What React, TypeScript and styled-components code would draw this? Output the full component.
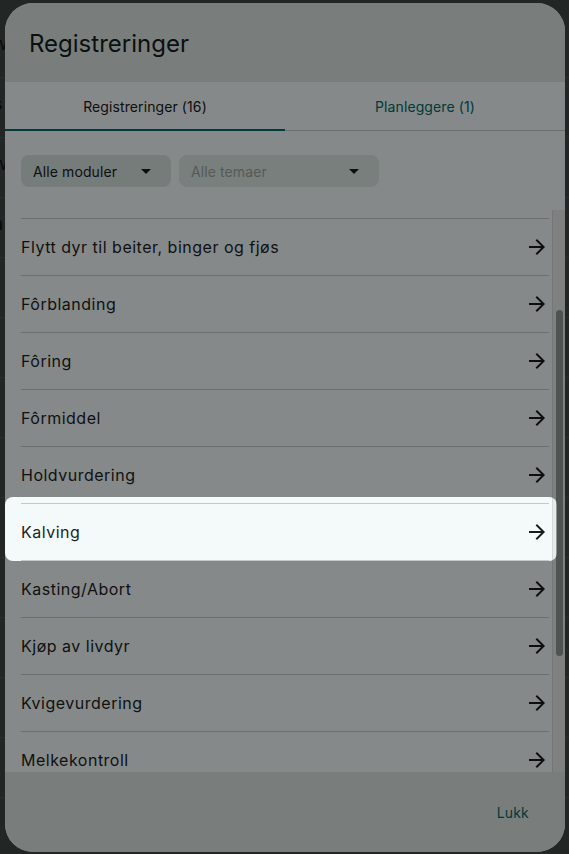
import React, { useLayoutEffect, useRef, useState } from "react";
import styled, { createGlobalStyle } from "styled-components";
import { MdArrowForward, MdArrowDropDown } from "react-icons/md";

const GlobalStyle = createGlobalStyle`
  html, body {
    margin: 0;
    padding: 0;
    width: 100%;
    height: 100%;
    overflow: hidden;
    background: #3f4544;
  }
  body {
    font-family: Inter, "Noto Sans", sans-serif;
  }
  *, *::before, *::after { box-sizing: border-box; }
`;

const Page = styled.div`
  position: relative;
  width: 569px;
  height: 854px;
  overflow: hidden;
  background: #3f4544;
`;

const BackPage = styled.div`
  display: flex;
  flex-direction: column;
  padding-top: 18px;
`;

const BackRow = styled.div`
  height: 60px;
  border-bottom: 1px solid #4c5351;
  display: flex;
  align-items: center;
  padding-bottom: 8px;
  margin-left: -7px;
  font-size: 18px;
  color: #111414;
`;

const Scrim = styled.div`
  position: absolute;
  inset: 0;
  display: flex;
  padding: 3px 4px 2px 5px;
`;

const Dialog = styled.section`
  width: 560px;
  height: 849px;
  border-radius: 28px;
  overflow: hidden;
  background: #f4fafa;
  display: flex;
  flex-direction: column;
`;

const Header = styled.header`
  background: #dde5e3;
  padding: 25px 24px 22px;
`;

const Title = styled.h2`
  margin: 0;
  font-size: 24px;
  line-height: 32px;
  font-weight: 400;
  color: #171d1c;
`;

const TabBar = styled.div`
  display: grid;
  grid-template-columns: 1fr 1fr;
  height: 49px;
  border-bottom: 1px solid #c3cbc9;
`;

const Tab = styled.button<{ $active?: boolean }>`
  position: relative;
  border: none;
  background: transparent;
  font-family: inherit;
  font-size: 14px;
  font-weight: 400;
  letter-spacing: 0.1px;
  color: ${(p) => (p.$active ? "#191c1c" : "#006a6a")};
  padding: 0;
  &::after {
    content: "";
    position: absolute;
    left: 0;
    right: 0;
    bottom: -1px;
    height: 2px;
    background: ${(p) => (p.$active ? "#006a6a" : "transparent")};
  }
`;

const Filters = styled.div`
  display: flex;
  gap: 8px;
  padding: 24px 16px 23px;
`;

const Chip = styled.div<{ $width: number; $disabled?: boolean }>`
  width: ${(p) => p.$width}px;
  height: 32px;
  border-radius: 8px;
  background: ${(p) => (p.$disabled ? "#dde7e4" : "#d5e2df")};
  display: flex;
  align-items: center;
  justify-content: space-between;
  padding: 0 13px 0 12px;
  font-size: 14px;
  letter-spacing: 0.1px;
  color: ${(p) => (p.$disabled ? "#9aa4a1" : "#191c1c")};
  svg {
    color: #191c1c;
    flex: none;
  }
`;

const ListWrap = styled.div`
  position: relative;
  flex: 1;
  min-height: 0;
  display: flex;
`;

const List = styled.div`
  flex: 1;
  overflow-y: auto;
  scrollbar-width: none;
  padding: 0 16px 0 16px;
  &::-webkit-scrollbar {
    display: none;
  }
`;

const ScrollTrack = styled.div`
  position: absolute;
  top: 0;
  bottom: 0;
  right: 0;
  width: 13px;
  background: #e6ecea;
  border-left: 1px solid #d2d9d7;
`;

const ScrollThumb = styled.div`
  position: absolute;
  left: 3px;
  width: 7px;
  border-radius: 4px;
  background: #8e9996;
`;

const Row = styled.div`
  height: 57px;
  border-bottom: 1px solid #c3cbc9;
  display: flex;
  align-items: center;
  justify-content: space-between;
  font-size: 16px;
  letter-spacing: 0.5px;
  color: #1c1f1f;
  svg {
    flex: none;
    color: #191c1c;
  }
`;

const Footer = styled.footer`
  height: 80px;
  flex: none;
  background: #dde5e3;
  display: flex;
  align-items: center;
  justify-content: flex-end;
  padding: 0 24px;
`;

const TextButton = styled.button`
  height: 40px;
  padding: 0 12px;
  border: none;
  background: transparent;
  font-family: inherit;
  font-size: 14px;
  font-weight: 400;
  letter-spacing: 0.2px;
  color: #006a6a;
`;

const Spotlight = styled.div`
  position: absolute;
  left: 5px;
  top: 497px;
  width: 552px;
  height: 64px;
  border-radius: 8px;
  box-shadow: 0 0 0 1400px rgba(0, 0, 0, 0.45);
  pointer-events: none;
`;

const items = [
  "Avvenning",
  "Bedekning",
  "Drektighetskontroll",
  "Flytt dyr til beiter, binger og fjøs",
  "Fôrblanding",
  "Fôring",
  "Fôrmiddel",
  "Holdvurdering",
  "Kalving",
  "Kasting/Abort",
  "Kjøp av livdyr",
  "Kvigevurdering",
  "Melkekontroll",
  "Salg av livdyr",
  "Slakt",
  "Utmelking",
];

const backRows = ["w", "s", "w", "a", "", "", "", "", "", "", "", "", "", ""];

export default function App() {
  const listRef = useRef<HTMLDivElement>(null);
  const [thumb, setThumb] = useState({ top: 95, height: 352 });

  useLayoutEffect(() => {
    const el = listRef.current;
    if (!el) return;
    el.scrollTop = 162;
    const ch = el.clientHeight;
    const sh = el.scrollHeight;
    const h = Math.max(20, (ch * ch) / sh);
    const max = sh - ch;
    const top = max > 0 ? (el.scrollTop / max) * (ch - h) : 0;
    setThumb({ top, height: h });
  }, []);

  return (
    <Page>
      <GlobalStyle />
      <BackPage>
        {backRows.map((t, i) => (
          <BackRow key={i}>{t}</BackRow>
        ))}
      </BackPage>
      <Scrim>
        <Dialog>
          <Header>
            <Title>Registreringer</Title>
          </Header>
          <TabBar>
            <Tab $active>Registreringer (16)</Tab>
            <Tab>Planleggere (1)</Tab>
          </TabBar>
          <Filters>
            <Chip $width={150}>
              <span>Alle moduler</span>
              <MdArrowDropDown size={24} />
            </Chip>
            <Chip $width={200} $disabled>
              <span>Alle temaer</span>
              <MdArrowDropDown size={24} />
            </Chip>
          </Filters>
          <ListWrap>
            <List ref={listRef}>
              {items.map((it) => (
                <Row key={it}>
                  <span>{it}</span>
                  <MdArrowForward size={24} />
                </Row>
              ))}
            </List>
            <ScrollTrack>
              <ScrollThumb style={{ top: thumb.top, height: thumb.height }} />
            </ScrollTrack>
          </ListWrap>
          <Footer>
            <TextButton>Lukk</TextButton>
          </Footer>
        </Dialog>
      </Scrim>
      <Spotlight />
    </Page>
  );
}
